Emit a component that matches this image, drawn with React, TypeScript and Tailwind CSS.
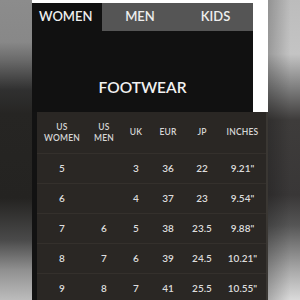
import React from "react";

const cols = ["w-[50px]", "w-[34px]", "w-[30px]", "w-[34px]", "w-[34px]", "w-[47px]"];

const rows = [
  ["5", "", "3", "36", "22", '9.21"'],
  ["6", "", "4", "37", "23", '9.54"'],
  ["7", "6", "5", "38", "23.5", '9.88"'],
  ["8", "7", "6", "39", "24.5", '10.21"'],
  ["9", "8", "7", "41", "25.5", '10.55"'],
];

export default function App() {
  return (
    <div
      className="flex w-[300px] h-[300px] overflow-hidden"
      style={{ fontFamily: "Lato, 'Open Sans', sans-serif" }}
    >
      <div className="w-[32px] h-full shrink-0 bg-[linear-gradient(180deg,#8c8c8c_0%,#888888_14%,#6a6a6a_20%,#303030_30%,#262523_38%,#242321_66%,#4a4a4a_80%,#909090_90%,#bcbcbc_100%)]" />
      <div className="w-[236px] h-full shrink-0 flex flex-col bg-white overflow-hidden">
        <div className="h-[3px] shrink-0" />
        <div className="flex shrink-0">
          <div className="w-[221px] flex flex-col">
            <div className="flex h-[28px] bg-[#555555] text-[#eeeeee] text-[13px] font-semibold">
              <div className="w-[70px] bg-[#111111] flex items-center pl-[7px]">WOMEN</div>
              <div className="w-[76px] flex items-center justify-center">MEN</div>
              <div className="w-[75px] flex items-center justify-center">KIDS</div>
            </div>
            <div className="h-[81px] bg-[#111111] flex items-end justify-center pb-[13px] text-[#f2f2f2] text-[15.5px] font-semibold">
              FOOTWEAR
            </div>
          </div>
          <div className="w-[15px] bg-white" />
        </div>
        <div className="flex flex-1 shrink-0">
          <div className="w-[5px] bg-[#121212]" />
          <div className="w-[229px] bg-[#2a2724] flex flex-col text-[#dddddd]">
            <div className="flex h-[41px] text-[8.5px] leading-[11px] font-semibold tracking-[0.2px] text-[#d6d6d6]">
              <div className={`${cols[0]} flex items-center justify-center text-center`}>US<br />WOMEN</div>
              <div className={`${cols[1]} flex items-center justify-center text-center`}>US<br />MEN</div>
              <div className={`${cols[2]} flex items-center justify-center`}>UK</div>
              <div className={`${cols[3]} flex items-center justify-center`}>EUR</div>
              <div className={`${cols[4]} flex items-center justify-center`}>JP</div>
              <div className={`${cols[5]} flex items-center justify-center`}>INCHES</div>
            </div>
            {rows.map((r, i) => (
              <div key={i} className="flex h-[30px] shrink-0 border-t border-[#34302c] text-[10px] font-semibold">
                {r.map((c, j) => (
                  <div key={j} className={`${cols[j]} flex items-center justify-center`}>{c}</div>
                ))}
              </div>
            ))}
          </div>
          <div className="w-[2px] bg-[#3a3733]" />
        </div>
      </div>
      <div className="w-[32px] h-full shrink-0 bg-[linear-gradient(90deg,rgba(0,0,0,0.22)_0%,rgba(0,0,0,0)_70%),linear-gradient(180deg,#bcbcbc_0%,#c4c4c4_18%,#7a7a7a_30%,#3e3c3b_40%,#393737_65%,#555555_75%,#a8a8a8_90%,#dadada_100%)]" />
    </div>
  );
}
